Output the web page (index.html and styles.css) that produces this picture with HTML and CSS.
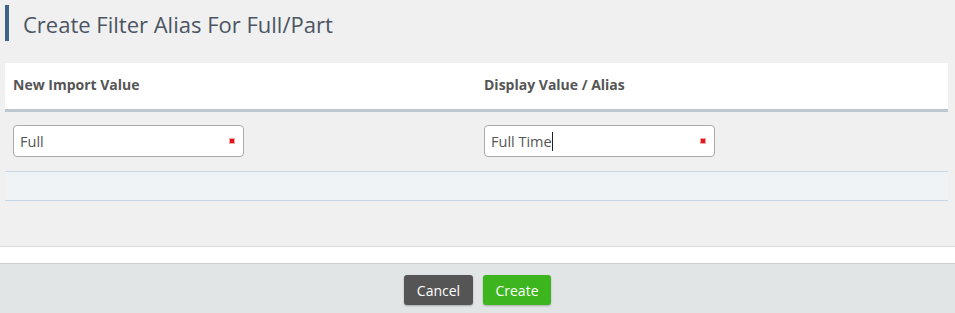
FILE: index.html
```html
<!DOCTYPE html>
<html>
<head>
<meta charset="utf-8">
<link rel="stylesheet" href="styles.css">
</head>
<body>
<div class="page">
  <div class="content">
    <h1 class="title">Create Filter Alias For Full/Part</h1>
    <div class="grid">
      <div class="head">
        <div class="hcell">New Import Value</div>
        <div class="hcell">Display Value / Alias</div>
      </div>
      <div class="row">
        <div class="cell">
          <div class="field"><span class="val">Full</span><span class="req"></span></div>
        </div>
        <div class="cell">
          <div class="field"><span class="val">Full Time<span class="caret"></span></span><span class="req"></span></div>
        </div>
      </div>
      <div class="row2"></div>
    </div>
  </div>
  <div class="strip"></div>
  <div class="footer">
    <button class="btn cancel">Cancel</button>
    <button class="btn create">Create</button>
  </div>
</div>
</body>
</html>
```
FILE: styles.css
```css
* { box-sizing: border-box; }
html, body { margin: 0; padding: 0; }
body {
  background: #f0f0f0;
  font-family: "Open Sans", "Liberation Sans", sans-serif;
  color: #555;
  width: 955px;
  height: 313px;
  overflow: hidden;
}
.content {
  padding: 5px 7px 0 5px;
  height: 246px;
}
.title {
  margin: 0;
  height: 36px;
  border-left: 4px solid #3f6289;
  padding-left: 14px;
  font-size: 22px;
  font-weight: 400;
  color: #4b5563;
  line-height: 38px;
}
.grid {
  margin-top: 22px;
}
.head {
  display: grid;
  grid-template-columns: 471px 1fr;
  background: #fff;
  height: 49px;
  border-bottom: 3px solid #bdc7cf;
}
.hcell {
  padding: 0 8px;
  font-size: 14px;
  font-weight: 700;
  color: #555;
  line-height: 44px;
}
.row {
  display: grid;
  grid-template-columns: 471px 1fr;
  height: 60px;
  border-bottom: 1px solid #c5d6e8;
}
.cell {
  padding: 13px 8px 0 8px;
}
.field {
  width: 231px;
  height: 32px;
  background: #fff;
  border: 1px solid #aaa;
  border-radius: 4px;
  display: flex;
  align-items: center;
  justify-content: space-between;
  padding: 0 8px 0 6px;
  font-size: 14.5px;
  color: #555;
}
.val { display: inline-flex; align-items: center; }
.caret {
  display: inline-block;
  width: 1px;
  height: 19px;
  background: #222;
}
.req {
  width: 6px;
  height: 6px;
  background: #e0161b;
  border: 1px solid #f4a5a8;
  background-clip: padding-box;
}
.row2 {
  height: 29px;
  background: #eff3f6;
  border-bottom: 1px solid #c5d6e8;
}
.strip {
  height: 18px;
  background: #fff;
  border-top: 1px solid #dcdcdc;
  border-bottom: 1px solid #cfcfcf;
}
.footer {
  height: 49px;
  background: #e1e5e5;
  display: flex;
  justify-content: center;
  align-items: flex-start;
  gap: 10px;
  padding-top: 11px;
}
.btn {
  height: 30px;
  border: none;
  border-radius: 3px;
  font-family: "Open Sans", "Liberation Sans", sans-serif;
  font-size: 14px;
  color: #fff;
  padding: 0 12px;
  box-shadow: 0 1px 2px rgba(0,0,0,0.25);
}
.cancel { background: #555; width: 69px; }
.create { background: #3db51e; width: 68px; }
```
